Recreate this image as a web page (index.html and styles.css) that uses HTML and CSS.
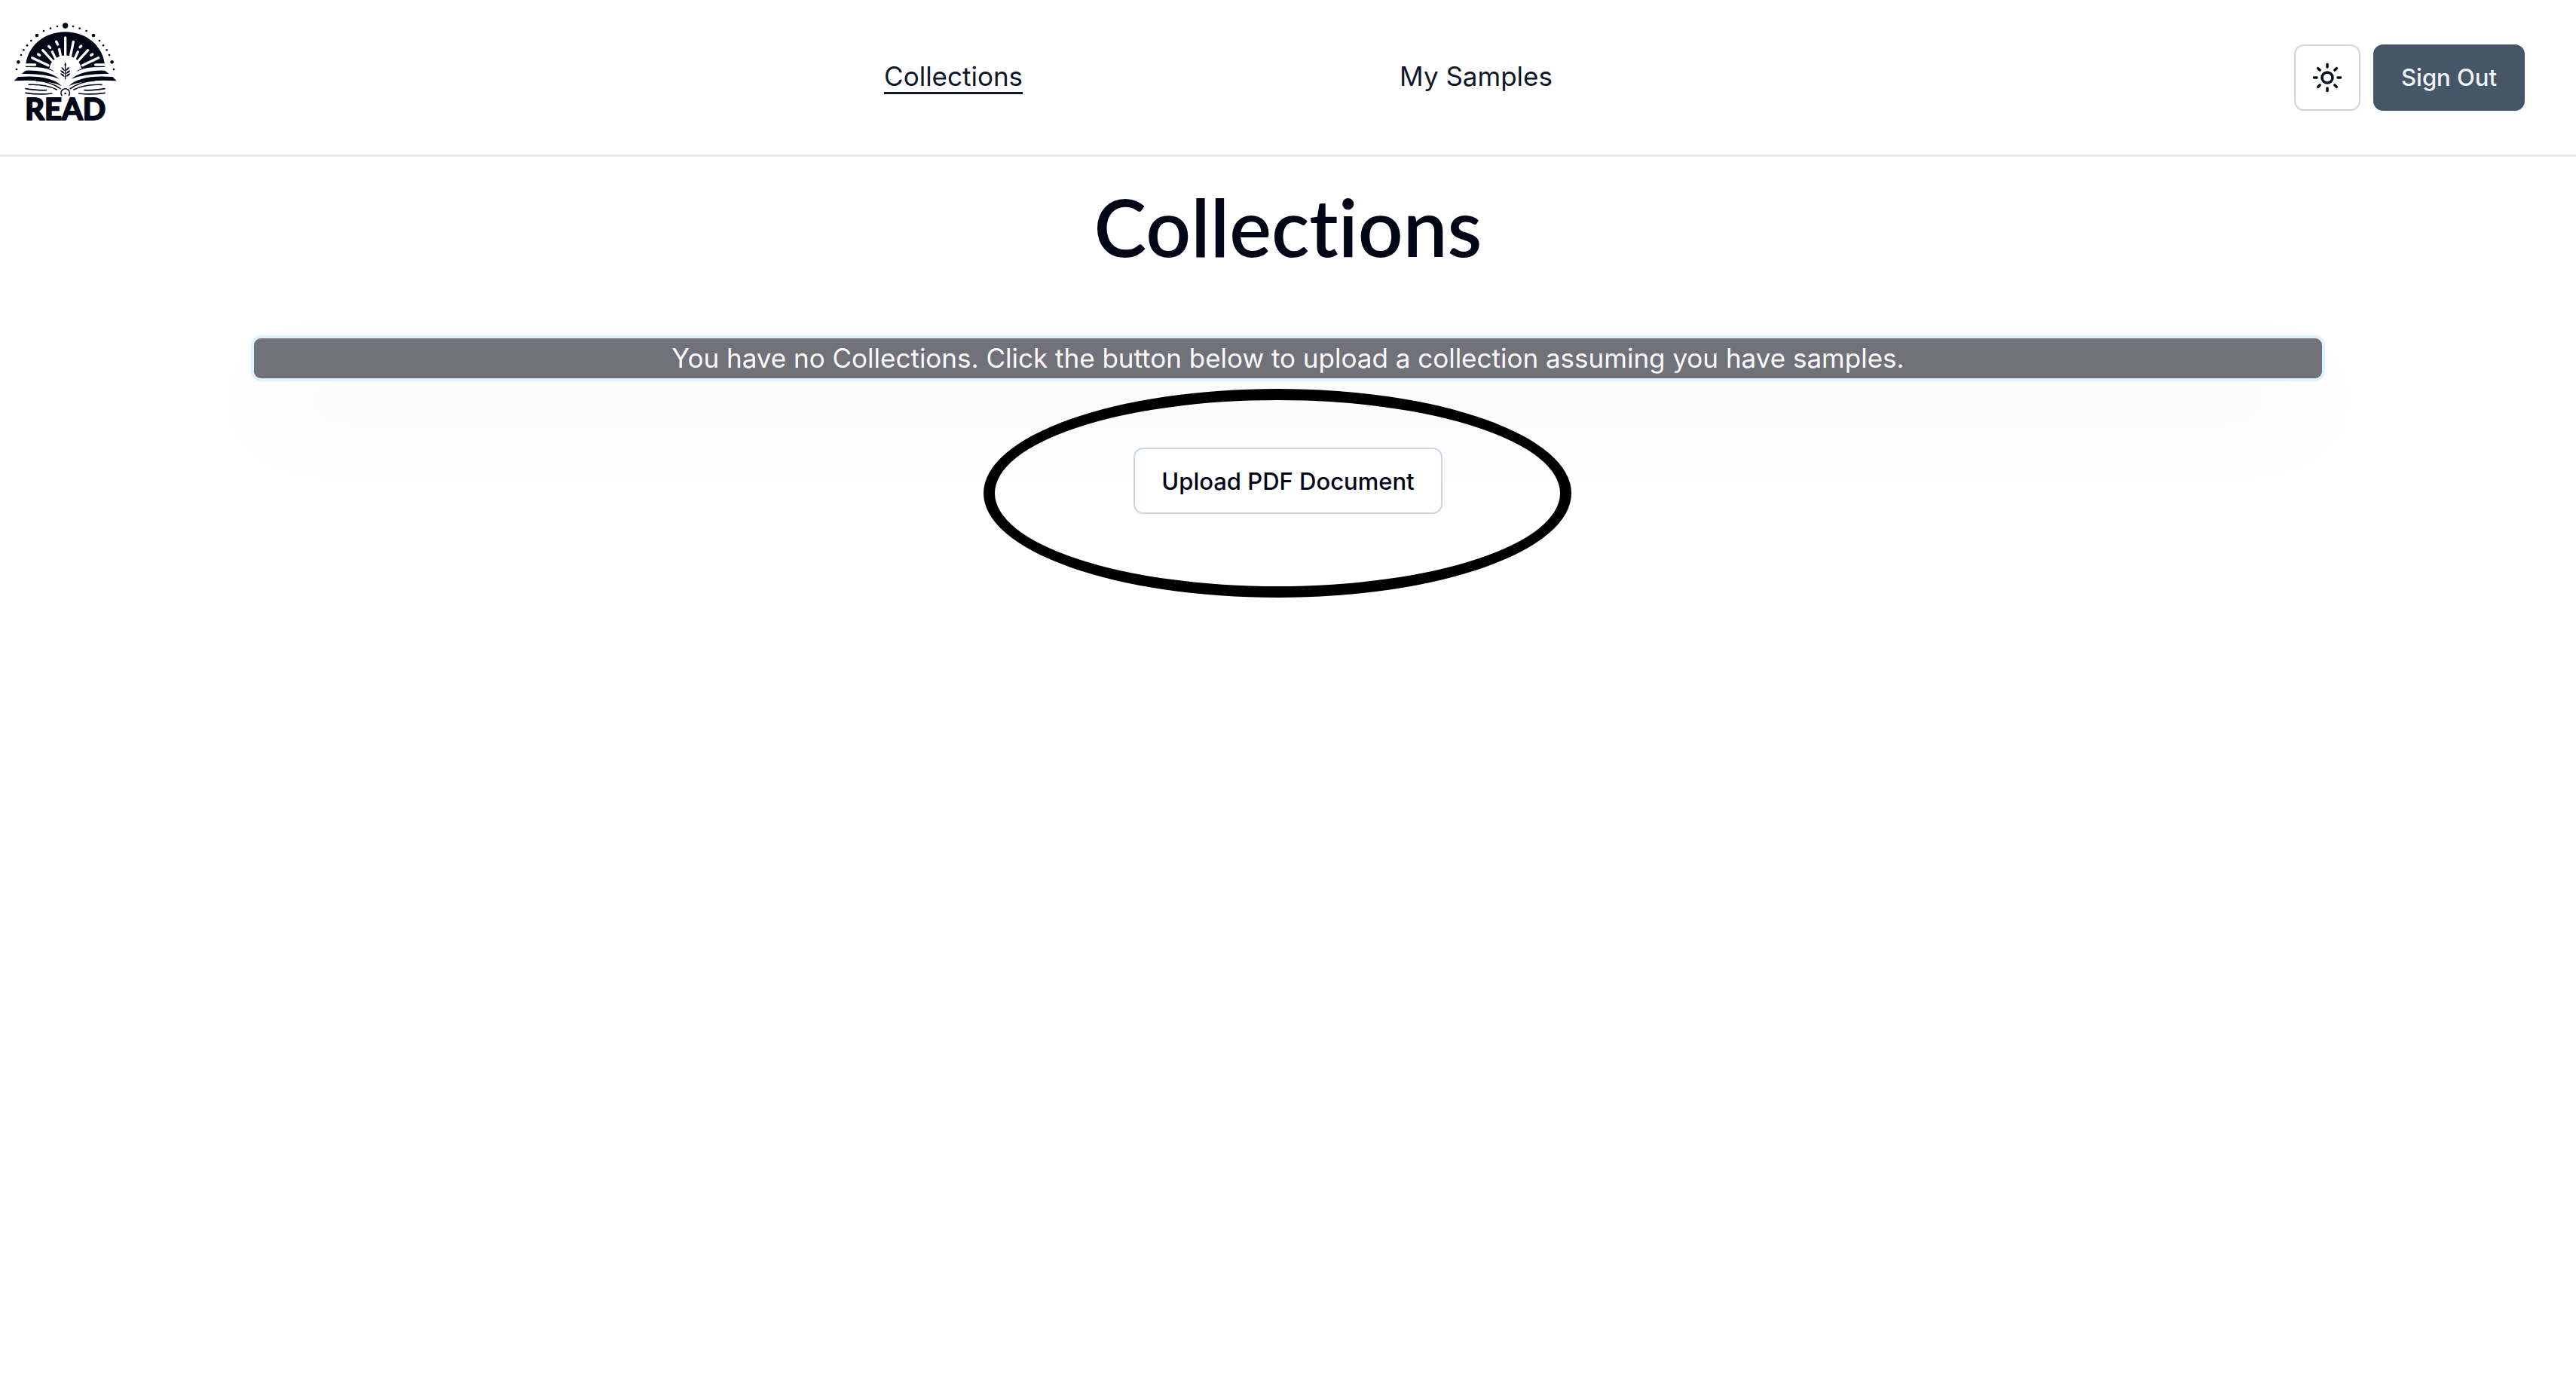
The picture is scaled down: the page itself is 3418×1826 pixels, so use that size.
FILE: index.html
```html
<!DOCTYPE html>
<html lang="en">
<head>
  <meta charset="UTF-8" />
  <meta name="viewport" content="width=device-width, initial-scale=1" />
  <title>Collections</title>
  <link rel="stylesheet" href="styles.css">
</head>
<body>

  <header class="site-header">
    <a class="logo" href="#" aria-label="READ home">
      <svg viewBox="0 -30 567 615">
        <!-- dome -->
        <path d="M102 237 C106 155 175 97 260 97 C345 97 414 155 418 237 L370 238 L318 243 L298 262 L222 262 L202 243 L150 238 Z" fill="#020617" />
        <!-- inner glow -->
        <path d="M196 243 Q205 196 260 190 Q315 196 324 243 L300 275 H220 Z" fill="#fff" />
        <!-- rays -->
        <g stroke="#fff" stroke-width="10" stroke-linecap="round">
          <path d="M260 120V205M292 136L278 205M224 136L230 147M208 176L226 212M236 166L244 206M170 170L212 216M194 154L200 160M152 186L158 190M128 200L192 230M103 228L140 228" />
          <path d="M318 158L323 153M310 176L294 212M350 170L308 216M362 190L368 186M392 200L328 230M417 228L380 228" />
        </g>
        <!-- dots -->
        <g fill="#020617">
          <circle cx="260" cy="72" r="11" />
          <circle cx="147" cy="111" r="7" /><circle cx="372" cy="111" r="7" />
          <circle cx="73" cy="217" r="7" /><circle cx="446" cy="217" r="7" />
          <circle cx="228" cy="75" r="4" /><circle cx="291" cy="75" r="4" />
          <circle cx="201" cy="83" r="4" /><circle cx="317" cy="83" r="4" />
          <circle cx="174" cy="93" r="4" /><circle cx="344" cy="93" r="4" />
          <circle cx="124" cy="132" r="4" /><circle cx="396" cy="132" r="4" />
          <circle cx="108" cy="151" r="4" /><circle cx="411" cy="151" r="4" />
          <circle cx="94" cy="169" r="4" /><circle cx="425" cy="169" r="4" />
          <circle cx="84" cy="189" r="4" /><circle cx="435" cy="189" r="4" />
          <circle cx="66" cy="246" r="4" /><circle cx="453" cy="246" r="4" />
        </g>
        <!-- book pages -->
        <g fill="#020617">
          <path d="M102 251 Q190 248 236 284 Q180 262 86 264 Z" />
          <path d="M418 251 Q330 248 284 284 Q340 262 434 264 Z" />
          <path d="M72 276 Q200 266 246 312 Q180 284 56 292 Z" />
          <path d="M448 276 Q320 266 274 312 Q340 284 464 292 Z" />
          <path d="M164 238 Q196 238 218 256 Q196 246 164 238 Z" />
          <path d="M356 238 Q324 238 302 256 Q324 246 356 238 Z" />
        </g>
        <g fill="none" stroke="#020617" stroke-width="5" stroke-linecap="round">
          <path d="M145 291Q200 294 240 323M375 291Q320 294 280 323" />
          <path d="M115 307Q185 305 226 327M405 307Q335 305 294 327" />
          <path d="M102 323Q150 331 184 329M417 323Q370 331 336 329" />
          <path d="M102 340Q160 348 206 342M417 340Q360 348 314 342" />
          <path d="M246 350A17 17 0 1 1 274 350" />
          <path d="M260 228V284" stroke-width="4" />
        </g>
        <circle cx="260" cy="342" r="4" fill="#020617" />
        <path d="M260 236Q253 227 260 218Q267 227 260 236ZM258 252Q245 248 244 237Q256 240 258 252ZM262 252Q275 248 276 237Q264 240 262 252ZM258 264Q243 261 240 250Q254 252 258 264ZM262 264Q277 261 280 250Q266 252 262 264ZM258 276Q243 273 240 262Q254 264 258 276ZM262 276Q277 273 280 262Q266 264 262 276Z" fill="#020617" />
        <text class="logo-text" x="260" y="447" text-anchor="middle">READ</text>
      </svg>
    </a>

    <nav class="main-nav">
      <a class="active" href="#">Collections</a>
      <a href="#">My Samples</a>
    </nav>

    <div class="actions">
      <button class="btn btn-icon" type="button" aria-label="Toggle theme">
        <svg viewBox="0 0 24 24" fill="none" stroke="currentColor" stroke-width="2" stroke-linecap="round" stroke-linejoin="round">
          <circle cx="12" cy="12" r="4" />
          <path d="M12 2v2M12 20v2M4.93 4.93l1.41 1.41M17.66 17.66l1.41 1.41M2 12h2M20 12h2M6.34 17.66l-1.41 1.41M19.07 4.93l-1.41 1.41" />
        </svg>
      </button>
      <button class="btn btn-dark" type="button">Sign Out</button>
    </div>
  </header>

  <main class="content">
    <h1>Collections</h1>
    <p class="notice">You have no Collections. Click the button below to upload a collection assuming you have samples.</p>
    <div class="upload">
      <button class="btn" type="button">Upload PDF Document</button>
      <span class="highlight"></span>
    </div>
  </main>

</body>
</html>
```
FILE: styles.css
```css
* {
  box-sizing: border-box;
}

body {
  margin: 0;
  min-height: 100vh;
  font-family: Inter, sans-serif;
  font-size: 35px;
  line-height: 53px;
  color: #020617;
  background-color: #fff;
}

/* header */
.site-header {
  display: flex;
  align-items: center;
  justify-content: space-between;
  padding-right: 68px;
  border-bottom: 3px solid #e2e8f0;
}

.logo svg {
  display: block;
  width: 189px;
  height: 205px;
}

.logo-text {
  font-family: Lato, sans-serif;
  font-size: 120px;
  font-weight: 700;
  fill: #020617;
  stroke: #020617;
  stroke-width: 6px;
  stroke-linejoin: round;
}

.main-nav {
  display: flex;
  gap: 500px;
}

.main-nav a {
  color: #0f172a;
  text-decoration: none;
  line-height: 42px;
  border-bottom: 3px solid transparent;
}

.main-nav a.active {
  border-bottom-color: #0f172a;
}

.actions {
  display: flex;
  gap: 17px;
}

/* buttons */
.btn {
  display: inline-flex;
  align-items: center;
  justify-content: center;
  height: 88px;
  padding: 0 35px;
  font-family: inherit;
  font-size: 31px;
  font-weight: 500;
  color: #020617;
  background-color: #fff;
  border: 2px solid #cbd5e1;
  border-radius: 13px;
  cursor: pointer;
}

.btn-icon {
  width: 88px;
  padding: 0;
}

.btn-icon svg {
  width: 42px;
  height: 42px;
}

.btn-dark {
  color: #f1f5f9;
  background-color: #475569;
  border-color: #475569;
}

/* page */
.content {
  display: flex;
  flex-direction: column;
  align-items: center;
  padding: 40px 32px;
}

h1 {
  margin: 0 0 92px;
  font-family: Lato, sans-serif;
  font-size: 105px;
  font-weight: 600;
  line-height: 105px;
  font-variant-ligatures: none;
}

.notice {
  width: 100%;
  max-width: 2752px;
  margin: 0 0 88px;
  text-align: center;
  color: #fafafa;
  background-color: #71717a;
  border: 4px solid #e0f2fe;
  border-radius: 13px;
  box-shadow: 0 55px 110px -26px rgba(0, 0, 0, 0.25);
}

.upload {
  position: relative;
}

/* ring drawn around the upload button */
.highlight {
  position: absolute;
  top: -78px;
  left: -199px;
  width: 780px;
  height: 277px;
  border: 15px solid #000;
  border-radius: 50%;
  pointer-events: none;
}
```
